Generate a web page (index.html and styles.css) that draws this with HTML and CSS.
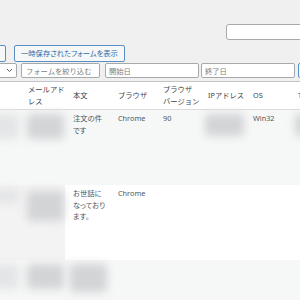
FILE: index.html
```html
<!DOCTYPE html>
<html lang="ja">
<head>
  <meta charset="UTF-8">
  <title>フォーム送信一覧</title>
  <link rel="stylesheet" href="styles.css">
</head>
<body>
  <div class="searchbar">
    <input type="search" class="search">
  </div>
  <div class="actions">
    <button class="btn btn-apply">適用</button>
    <button class="btn">一時保存されたフォームを表示</button>
  </div>
  <div class="filters">
    <div class="select">
      <svg width="7" height="5" viewBox="0 0 7 5"><path d="M1 1l2.5 2.5L6 1" fill="none" stroke="#50575e" stroke-width="1"/></svg>
    </div>
    <input type="text" class="fld fld-form" placeholder="フォームを絞り込む">
    <input type="text" class="fld fld-date" placeholder="開始日">
    <input type="text" class="fld fld-date fld-end" placeholder="終了日">
    <button class="btn btn-filter">絞り込み</button>
  </div>

  <table class="entries">
    <colgroup>
      <col><col><col><col><col><col><col><col>
    </colgroup>
    <thead>
      <tr>
        <th>名前</th>
        <th>メールアドレス</th>
        <th>本文</th>
        <th>ブラウザ</th>
        <th class="strict">ブラウザバージョン</th>
        <th>IPアドレス</th>
        <th>OS</th>
        <th>Timezone</th>
      </tr>
    </thead>
    <tbody>
      <tr class="alt">
        <td><span class="blur blur-light"></span></td>
        <td><span class="blur"></span></td>
        <td>注文の件です</td>
        <td>Chrome</td>
        <td>90</td>
        <td><span class="blur blur-short"></span></td>
        <td>Win32</td>
        <td><span class="blur blur-short"></span></td>
      </tr>
      <tr>
        <td class="hidden"><span class="blur blur-light blur-thin"></span></td>
        <td class="hidden"><span class="blur blur-tall"></span></td>
        <td>お世話になっております。</td>
        <td>Chrome</td>
        <td></td>
        <td></td>
        <td></td>
        <td></td>
      </tr>
      <tr class="alt">
        <td><span class="blur blur-light"></span></td>
        <td><span class="blur"></span></td>
        <td><span class="blur blur-wide"></span></td>
        <td></td>
        <td></td>
        <td></td>
        <td></td>
        <td></td>
      </tr>
    </tbody>
  </table>
</body>
</html>
```

FILE: styles.css
```css
body { margin: 0; width: 300px; height: 300px; overflow: hidden; background: #f0f0f1; font-family: "Noto Sans", "Noto Sans CJK JP", sans-serif; font-size: 7.3px; color: #50575e; }
input, button { font-family: inherit; font-size: inherit; box-sizing: border-box; margin: 0; flex-shrink: 0; }

.searchbar { display: flex; justify-content: flex-end; padding-top: 24px; margin-right: -10px; }
.search { width: 84px; height: 16px; border: 1px solid #a7aaad; border-radius: 3px; background: #fff; }

.actions { display: flex; gap: 8px; margin-top: 5px; margin-left: -35px; }
.btn { height: 17px; padding: 0 6px; border: 1px solid #5a8fc4; border-radius: 2px; background: #f6f7f7; color: #2f6ca8; line-height: 15px; white-space: nowrap; font-feature-settings: "palt"; }
.btn-apply { width: 41px; }

.filters { display: flex; align-items: center; margin-top: 1px; margin-left: -24px; white-space: nowrap; }
.select { flex-shrink: 0; width: 41px; height: 15px; box-sizing: border-box; border: 1px solid #a7aaad; border-radius: 2px; background: #fff; display: flex; align-items: center; justify-content: flex-end; padding-right: 3px; }
.fld { height: 15px; border: 1px solid #a7aaad; border-radius: 2px; background: #fff; padding: 0 4px; color: #50575e; }
.fld::placeholder { color: #7b7f84; }
.fld-form { width: 79px; margin-left: 4px; }
.fld-date { width: 94px; margin-left: 5px; padding: 0 3px; }
.fld-end { margin-left: 2px; }
.btn-filter { height: 15px; margin-left: 3px; }

.entries { margin-top: 3px; margin-left: -25px; width: 360px; table-layout: fixed; border-collapse: collapse; border-top: 1px solid #c3c4c7; }
.entries col { width: 45px; }
.entries th { background: #fff; text-align: left; font-weight: normal; color: #3c434a; line-height: 11.7px; padding: 2px 0 2px 8px; vertical-align: middle; border-bottom: 1px solid #dcdcde; }
.entries th.strict { line-break: strict; }
.entries td { height: 75px; box-sizing: border-box; padding: 3px 3px 4px 8px; line-height: 11.7px; vertical-align: top; background: #fff; font-feature-settings: "palt"; }
.entries .alt td { background: #f6f7f7; }
.entries td.hidden { background: #f3f3f4; }

.blur { display: block; height: 25px; margin: 1px -2px 0 -1px; background: #d3d4d6; border-radius: 4px; filter: blur(4px); }
.blur-light { background: #e4e5e6; }
.blur-thin { height: 14px; }
.blur-tall { height: 30px; margin-top: 3px; }
.blur-short { height: 22px; margin-left: -3px; }
.blur-wide { height: 28px; margin-left: -3px; margin-right: 0; }
```
